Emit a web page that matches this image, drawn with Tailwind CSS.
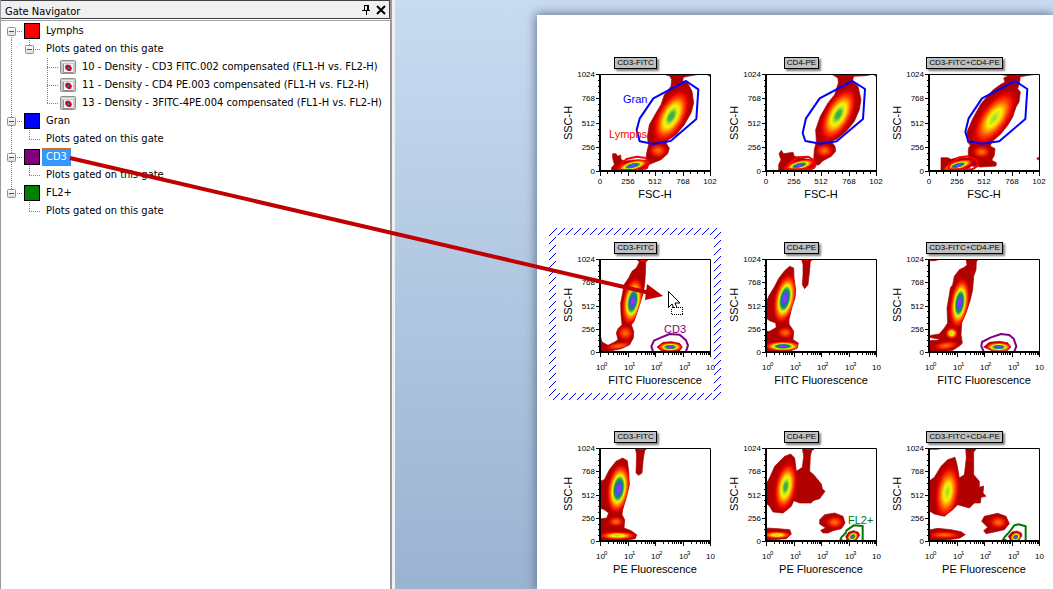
<!DOCTYPE html>
<html lang="en">
<head>
    <meta charset="UTF-8">
    <meta name="viewport" content="width=device-width, initial-scale=1.0">
    <title>Gate Navigator</title>
    <script src="https://cdn.jsdelivr.net/npm/@tailwindcss/browser@4"></script>
</head>
<body class="relative flex h-screen overflow-hidden bg-white text-black font-['DejaVu_Sans_Condensed','Noto_Sans',sans-serif] text-[11px]">

    <!-- Shared gradients, tree guides and hatch pattern -->
    <svg class="absolute size-0" aria-hidden="true">
        <defs>
            <radialGradient id="violet">
                <stop offset="0" stop-color="#b428ff"/><stop offset=".1" stop-color="#9030ff"/><stop offset=".22" stop-color="#3858d8"/><stop offset=".34" stop-color="#109060"/>
                <stop offset=".42" stop-color="#70c830"/><stop offset=".5" stop-color="#f8f800"/><stop offset=".6" stop-color="#ffa000"/><stop offset=".74" stop-color="#ff3000"/>
                <stop offset=".88" stop-color="#d80000"/><stop offset="1" stop-color="#b00000" stop-opacity="0"/>
            </radialGradient>
            <radialGradient id="green">
                <stop offset="0" stop-color="#28a850"/><stop offset=".14" stop-color="#50b840"/><stop offset=".26" stop-color="#c8e820"/><stop offset=".36" stop-color="#fff000"/>
                <stop offset=".48" stop-color="#ffa800"/><stop offset=".62" stop-color="#ff4000"/><stop offset=".78" stop-color="#e80000"/><stop offset="1" stop-color="#b00000" stop-opacity="0"/>
            </radialGradient>
            <radialGradient id="yellow">
                <stop offset="0" stop-color="#98d828"/><stop offset=".14" stop-color="#c8e820"/><stop offset=".28" stop-color="#fff000"/><stop offset=".42" stop-color="#ffa000"/>
                <stop offset=".58" stop-color="#ff4000"/><stop offset=".76" stop-color="#e80000"/><stop offset="1" stop-color="#b00000" stop-opacity="0"/>
            </radialGradient>
            <radialGradient id="orange">
                <stop offset="0" stop-color="#ff8000"/><stop offset=".25" stop-color="#ff5000"/><stop offset=".6" stop-color="#e81000"/><stop offset="1" stop-color="#b00000" stop-opacity="0"/>
            </radialGradient>
            <linearGradient id="knob" x2="0" y2="1">
                <stop offset="0" stop-color="#fff"/><stop offset="1" stop-color="#dcdcdc"/>
            </linearGradient>
            <pattern id="hatch" width="8" height="8" patternUnits="userSpaceOnUse">
                <path d="M-1 9 9 -1" stroke="#0000f0" shape-rendering="crispEdges"/>
            </pattern>
            <g id="down" stroke="#808080" stroke-dasharray="1 1"><path d="M9.5 0V18"/></g>
            <g id="tee" stroke="#808080" stroke-dasharray="1 1" fill="none"><path d="M9.5 0V18M9 9.5H20"/></g>
            <g id="end" stroke="#808080" stroke-dasharray="1 1" fill="none"><path d="M9.5 0V9M9 9.5H20"/></g>
            <g id="minus">
                <rect x="5.5" y="5.5" width="8" height="8" rx="1" fill="url(#knob)" stroke="#919191"/>
                <path d="M7 9.5H12" stroke="#3050a8"/>
            </g>
            <g id="ploticon">
                <rect x=".5" y="1.5" width="15" height="13" rx="1" fill="#c8c8c8" stroke="#909090"/>
                <path d="M2 3.500H14" stroke="#eee"/>
                <rect x="3" y="5" width="10" height="8" fill="#f4f4f4"/>
                <path d="M3.500 5V13.500H13" fill="none" stroke="#909090"/>
                <path d="M5 7 7 5.500 10 6 12 9 11 12 8 12 5.500 10Z" fill="#d01020"/>
                <circle cx="8.500" cy="9" r="1.800" fill="#2040a0"/><circle cx="8.500" cy="9" r=".8" fill="#20c080"/>
            </g>
        </defs>
    </svg>

    <!-- Gate Navigator panel -->
    <aside class="flex w-[395px] shrink-0 border-r-[3px] border-[#f0f0f0]">
        <div class="flex flex-1 flex-col border-r-2 border-l border-[#9a9a9e]">
            <header class="flex h-[19px] items-center justify-between border-t border-r border-b border-[#404040] bg-[#f0f0f0] pl-1">
                <h1 class="pt-1 leading-[14px]">Gate Navigator</h1>
                <div class="flex gap-[3px] pr-[2px]">
                    <button aria-label="Auto hide" class="size-3">
                        <svg class="size-3" viewBox="0 0 12 12" shape-rendering="crispEdges" fill="none" stroke="#000"><path d="M4.500 6V1.500H9M2 6.500H10M6.500 7V11"/><path d="M8 1V6" stroke-width="2"/></svg>
                    </button>
                    <button aria-label="Close" class="size-3">
                        <svg class="size-3" viewBox="0 0 12 12" fill="none" stroke="#000" stroke-width="2"><path d="M2 2 10 10M10 2 2 10"/></svg>
                    </button>
                </div>
            </header>
            <ul id="tree" class="mt-px flex-1 border-t border-[#a0a0a8] pt-px pl-px"></ul>
        </div>
    </aside>

    <!-- Workspace -->
    <main class="flex-1 overflow-hidden bg-linear-to-b from-[#c8dbf1] to-[#9ab3d1] pt-[15px] pl-[142px]">
        <section class="h-full bg-white pt-[42px] pl-[13px] shadow-[0_0_10px_1px_#60708a]">
            <div id="plots" class="grid grid-cols-[166px_163px_171px] grid-rows-[185px_189px_auto] font-['Liberation_Sans',sans-serif]"></div>
        </section>
    </main>

    <!-- Drag arrow and cursor -->
    <svg class="pointer-events-none absolute top-0 left-0" width="700" height="330" aria-hidden="true">
        <path d="M70 158 650 293" stroke="#c00000" stroke-width="4"/>
        <path d="M647 284 663 296 645 300Z" fill="#c00000"/>
        <path d="M668.500 291.500V307.500L672 304 675 311 678 310 675 303H680Z" fill="#fff" stroke="#000"/>
        <rect x="671.500" y="307.500" width="11" height="7" fill="#fff" stroke="#000" stroke-dasharray="1 1" shape-rendering="crispEdges"/>
    </svg>

    <script>
        // guides: one entry per indent level
        const rows = [
            { guides: ['first'], color: '#ff0000', text: 'Lymphs' },
            { guides: ['down', 'open'], text: 'Plots gated on this gate' },
            { guides: ['down', '', 'tee'], icon: true, text: '10 - Density - CD3 FITC.002 compensated (FL1-H vs. FL2-H)' },
            { guides: ['down', '', 'tee'], icon: true, text: '11 - Density - CD4 PE.003 compensated (FL1-H vs. FL2-H)' },
            { guides: ['down', '', 'end'], icon: true, text: '13 - Density - 3FITC-4PE.004 compensated (FL1-H vs. FL2-H)' },
            { guides: ['mid'], color: '#0000ff', text: 'Gran' },
            { guides: ['down', 'end'], text: 'Plots gated on this gate' },
            { guides: ['mid'], color: '#800080', text: 'CD3', selected: true },
            { guides: ['down', 'end'], text: 'Plots gated on this gate' },
            { guides: ['last'], color: '#008000', text: 'FL2+' },
            { guides: ['', 'end'], text: 'Plots gated on this gate' }
        ];
        const knobs = {
            first: '<path d="M9.5 9V18M9 9.5H20" fill="none" stroke="#808080" stroke-dasharray="1 1"/>',
            open: '<use href="#end"/>',
            mid: '<use href="#tee"/>',
            last: '<use href="#end"/>'
        };

        function guide(g) {
            if (knobs[g]) {
                return `<button class="h-[18px] w-[18px]" aria-label="Collapse"><svg class="overflow-visible" width="18" height="18">${knobs[g]}<use href="#minus"/></svg></button>`;
            }
            return `<svg class="overflow-visible" width="18" height="18">${g ? `<use href="#${g}"/>` : ''}</svg>`;
        }

        document.getElementById('tree').innerHTML = rows.map(r => `
            <li class="flex h-[18px] items-center">
                ${r.guides.map(guide).join('')}
                ${r.color ? `<span class="ml-1 size-4 border border-black" style="background:${r.color}"></span>` : ''}
                ${r.icon ? '<svg class="ml-1" width="16" height="16"><use href="#ploticon"/></svg>' : ''}
                <span class="${r.color || r.icon ? 'ml-[2px]' : 'ml-1'} border px-[3px] leading-4 whitespace-nowrap ${r.selected ? 'border-dotted border-[#c87020] bg-[#3399ff] text-white' : 'border-transparent'}">${r.text}</span>
            </li>`).join('');

        const blue = '#0000ff', red = '#ff0000', purple = '#800080', dark = '#007800';

        // o: origin of the plot area, body: outer contours, hot: [gradient, cx, cy, rx, ry, angle], gates: [colour, path]
        const plots = [
            { title: 'CD3-FITC', x: 'FSC-H', h: 97, o: '152 73',
              body: 'M342 73H455L420 79 402 83 400 95 415 100 428 125 433 160 425 190 405 225 380 255 350 275 352 283 360 296 355 312 335 330 310 340 297 346 294 352 280 364H188L186 355 195 345 190 325 190 312 200 312 205 320 214 316 215 330 228 334 265 330 290 332 292 310 298 285 294 262 300 225 320 190 335 165 345 135 365 110 367 90 362 80ZM470 73H481V80Z',
              hot: [['green', 366, 200, 98, 47, -62], ['orange', 326, 303, 32, 26, 0], ['violet', 250, 348, 52, 16, -14]],
              gates: [[blue, 'M410 94 447 119 441 208 364 274 313 283 271 275 262 240 271 207 312 146Z'], [red, 'M207 361 213 345 232 328 262 321 290 325 298 340 293 355 276 361Z']],
              labels: [['Gran', blue, 23, 29], ['Lymphs', red, 9, 64]] },
            { title: 'CD4-PE', x: 'FSC-H', h: 97, o: '139 73',
              body: 'M335 73H463L440 78 402 80 398 95 415 110 424 150 419 180 404 215 380 245 352 268 334 274 346 290 348 305 335 320 310 333 297 346 290 345 285 356 270 362H177V345L184 330 178 312 185 302 192 312 220 308 224 320 250 326 282 332 284 300 290 275 288 240 302 200 325 160 345 135 356 100 355 85ZM460 73H469V80Z',
              hot: [['green', 356, 195, 98, 46, -62], ['orange', 314, 303, 32, 24, 0], ['violet', 239, 347, 50, 16, -14]],
              gates: [[blue, 'M398 94 436 118 430 208 351 275 302 282 257 274 249 250 259 206 300 146Z'], [red, 'M196 359 207 342 234 323 265 321 283 332 287 348 272 359Z']] },
            { title: 'CD3-FITC+CD4-PE', x: 'FSC-H', h: 97, o: '134 76',
              body: 'M342 76H458L440 79 408 84 406 100 400 120 408 130 404 160 395 175 385 205 370 230 350 255 322 280 318 292 332 300 330 320 322 335 336 342 335 352 290 355 262 352 245 365H170V327H190L200 332 225 325 252 328 252 300 258 290 250 280 248 250 265 210 290 165 325 125 345 110 362 100 358 88 372 82ZM463 325 457 330 463 334Z',
              hot: [['yellow', 330, 208, 108, 48, -55], ['orange', 292, 310, 32, 22, 0], ['violet', 221, 350, 50, 15, -16]],
              gates: [[blue, 'M392 97 429 121 423 211 345 278 293 285 252 278 243 250 253 209 293 149Z'], [red, 'M192 361 198 345 225 326 250 323 276 332 282 350 264 362Z']] },
            { title: 'CD3-FITC', x: 'FITC Fluorescence', h: 93, o: '166 103', drop: true,
              body: 'M275 103H313L303 112 302 150 300 180 293 215 280 255 268 290 260 300 267 320 266 340 255 360 230 372 200 378 170 381 166 375V330L172 352 190 362 210 352 220 345 215 325 220 312 232 300 229 270 228 235 234 205 238 180 252 160 262 140 275 130 284 112ZM337 367 355 353 380 351 405 356 413 367 405 378H350Z',
              hot: [['violet', 264, 230, 76, 32, -80], ['orange', 242, 325, 28, 26, 0], ['orange', 222, 364, 46, 14, -8], ['orange', 295, 103, 18, 10, 0], ['violet', 377, 367, 40, 15, 0]],
              gates: [[purple, 'M325 380 320 365 328 348 350 338 375 328 405 330 424 347 430 362 424 380']],
              labels: [['CD3', purple, 64, 74]] },
            { title: 'CD4-PE', x: 'FITC Fluorescence', h: 93, o: '139 73',
              body: 'M139 205 147 185 165 155 178 130 195 108 210 95 222 100 223 130 228 165 226 190 216 220 208 255 208 268 222 290 220 315 236 325 233 340 215 348H139V290L150 290 170 278 168 265 150 258 139 250ZM245 73H282L272 80 270 105 265 150 255 162 248 150 250 120 250 88Z',
              hot: [['violet', 196, 192, 80, 34, -78], ['orange', 197, 294, 28, 20, 0], ['orange', 262, 73, 18, 8, 0], ['violet', 190, 335, 58, 16, 0]] },
            { title: 'CD3-FITC+CD4-PE', x: 'FITC Fluorescence', h: 93, o: '134 73',
              body: 'M245 73H281L276 82 275 105 268 125 265 165 258 195 245 235 232 265 230 300 234 325 228 332 205 347 180 350H134V318L165 316 163 313 134 308V303L165 298 180 280 190 265 188 220 195 180 198 160 205 150 210 125 225 105 240 98 248 90ZM134 73H172L150 78H134ZM298 337 315 323 345 320 370 324 380 337 370 347H320Z',
              hot: [['violet', 226, 205, 80, 30, -82], ['yellow', 202, 296, 22, 20, 0], ['orange', 185, 333, 44, 16, -8], ['violet', 343, 337, 42, 15, 0]],
              gates: [[purple, 'M298 350 291 335 293 322 320 308 350 298 375 301 388 312 396 335 390 350']] },
            { title: 'CD3-FITC', x: 'PE Fluorescence', h: 93, o: '152 70',
              body: 'M152 170 165 165 180 135 200 110 220 100 234 108 238 140 240 180 232 215 220 255 218 270 226 285 224 310 245 318 262 330 258 342 230 347H152V283L172 280 178 265 165 255 152 250ZM258 70H294L286 78 282 100 278 145 268 152 260 145 262 90Z',
              hot: [['violet', 208, 192, 80, 36, -82], ['orange', 200, 291, 28, 18, 0], ['orange', 276, 70, 16, 8, 0], ['yellow', 205, 333, 64, 14, 0]] },
            { title: 'CD4-PE', x: 'PE Fluorescence', h: 93, o: '139 70',
              body: 'M139 180 152 155 165 125 195 95 213 88 225 100 230 140 248 128 252 95 248 70H288L276 78 272 95 270 140 282 150 305 178 308 192 316 200 300 222 280 228 275 235 240 235 222 228 215 245 190 265 160 262 150 245 139 235ZM139 310 175 312 210 315 215 328 200 342 139 347ZM300 285 315 270 345 265 370 275 376 295 365 312 340 318 325 325 310 325 303 317 318 310 300 298ZM378 335 388 322 402 318 416 323 420 332 410 346H382Z',
              hot: [['green', 198, 186, 84, 36, -80], ['orange', 345, 293, 32, 22, 0], ['orange', 266, 70, 18, 8, 0], ['yellow', 172, 331, 50, 13, 0], ['violet', 399, 336, 20, 15, -30]],
              gates: [[dark, 'M368 346H362L365 338 378 325 380 318 402 302 429 304V346']],
              labels: [['FL2+', dark, 82, 76]] },
            { title: 'CD3-FITC+CD4-PE', x: 'PE Fluorescence', h: 93, o: '134 70',
              body: 'M134 170 150 158 170 125 190 105 212 98 218 120 225 160 240 150 246 100 244 70H278L268 82 268 150 285 170 285 188 298 184 296 205 305 215 290 218 288 235 270 235 255 250 220 240 205 255 180 275 150 268 134 258ZM134 70H175L160 74H134ZM134 316 160 311 200 315 230 321 243 330 225 341 180 347H134ZM292 290 300 275 340 266 365 275 375 297 360 315 330 322 305 327 298 318 310 308ZM372 335 383 322 398 319 411 325 413 333 404 346H378Z',
              hot: [['yellow', 189, 202, 92, 40, -82], ['orange', 342, 293, 32, 22, 0], ['orange', 180, 331, 58, 13, 0], ['violet', 394, 337, 19, 15, -30]],
              gates: [[dark, 'M366 346H356L360 338 375 322 390 302 402 299 424 305V346']] }
        ];

        // Axis ticks and their labels, relative to the plot area
        const linear = ['0', '256', '512', '768', '102'];

        function axes(p) {
            let d = '', t = '';
            for (let i = 0; i <= 16; i++) {
                const y = Math.round(p.h - i * p.h / 16);
                d += `M${i % 4 ? -2 : -4} ${y}H0`;
                if (i % 4 === 0) t += `<text x="-5" y="${y + 3}" text-anchor="end">${i * 64}</text>`;
            }
            for (let i = 0; i <= 4; i++) {
                const x = Math.round(i * 27.5);
                d += `M${x} ${p.h}v5`;
                if (p.h === 97) {
                    t += `<text x="${x}" y="${p.h + 13}" text-anchor="middle">${linear[i]}</text>`;
                    for (let m = 1; m < 4 && i < 4; m++) d += `M${Math.round(x + m * 6.9)} ${p.h}v3`;
                } else {
                    t += `<text x="${x - 4}" y="${p.h + 18}">10${i < 4 ? `<tspan class="text-[6px]" dx="-1" dy="-4">${i}</tspan>` : ''}</text>`;
                    for (let m = 2; m < 10 && i < 4; m++) d += `M${Math.round(x + Math.log10(m) * 27.5)} ${p.h}v3`;
                }
            }
            return `<path d="${d}" stroke="#000" shape-rendering="crispEdges"/>${t}`;
        }

        function plot(p) {
            const hot = p.hot.map(([g, x, y, rx, ry, a]) => `<ellipse rx="${rx}" ry="${ry}" transform="translate(${x} ${y}) rotate(${a})" fill="url(#${g})"/>`).join('');
            const gates = (p.gates || []).map(([c, d]) => `<path d="${d}" fill="none" stroke="${c}" stroke-width="6" stroke-linejoin="round"/>`).join('');
            const labels = (p.labels || []).map(([s, c, x, y]) => `<text class="text-[11px]" x="${x}" y="${y}" fill="${c}">${s}</text>`).join('');
            const id = 'clip' + plots.indexOf(p);
            return `
            <figure class="relative flex w-[171px] flex-col">
                <figcaption class="z-1 self-center border border-black bg-[#c0c0c0] px-[2px] text-[8px] leading-[10px] shadow-[2px_2px_2px_#808080]">${p.title}</figcaption>
                <svg class="text-[8px]" width="168" height="150">
                    <g transform="translate(50 5)">
                        <svg width="110" height="${p.h}" viewBox="${p.o} 330 ${p.h * 3}">
                            <clipPath id="${id}"><path d="${p.body}"/></clipPath>
                            <path d="${p.body}" fill="#b00000" stroke="#a80000" stroke-width="2" stroke-linejoin="round"/>
                            <g clip-path="url(#${id})">${hot}</g>
                            ${gates}
                        </svg>
                        <path d="M0 .5H110.5V${p.h}" fill="none" stroke="#000"/>
                        <path d="M0 0V${p.h}H111" fill="none" stroke="#000" stroke-width="2"/>
                        ${axes(p)}
                        ${labels}
                        <text class="text-[11px]" x="55" y="${p.h === 97 ? 124 : 125}" text-anchor="middle">${p.x}</text>
                        <text class="text-[11px]" transform="translate(-28 ${p.h === 97 ? 49 : 46}) rotate(-90)" text-anchor="middle">SSC-H</text>
                    </g>
                </svg>
                ${p.drop ? `<svg class="absolute -top-[14px] -left-px" width="172" height="172"><path d="M0 0H172V172H0ZM7 7V165H165V7Z" fill="url(#hatch)" fill-rule="evenodd"/></svg>` : ''}
            </figure>`;
        }

        document.getElementById('plots').innerHTML = plots.map(plot).join('');
    </script>
</body>
</html>
